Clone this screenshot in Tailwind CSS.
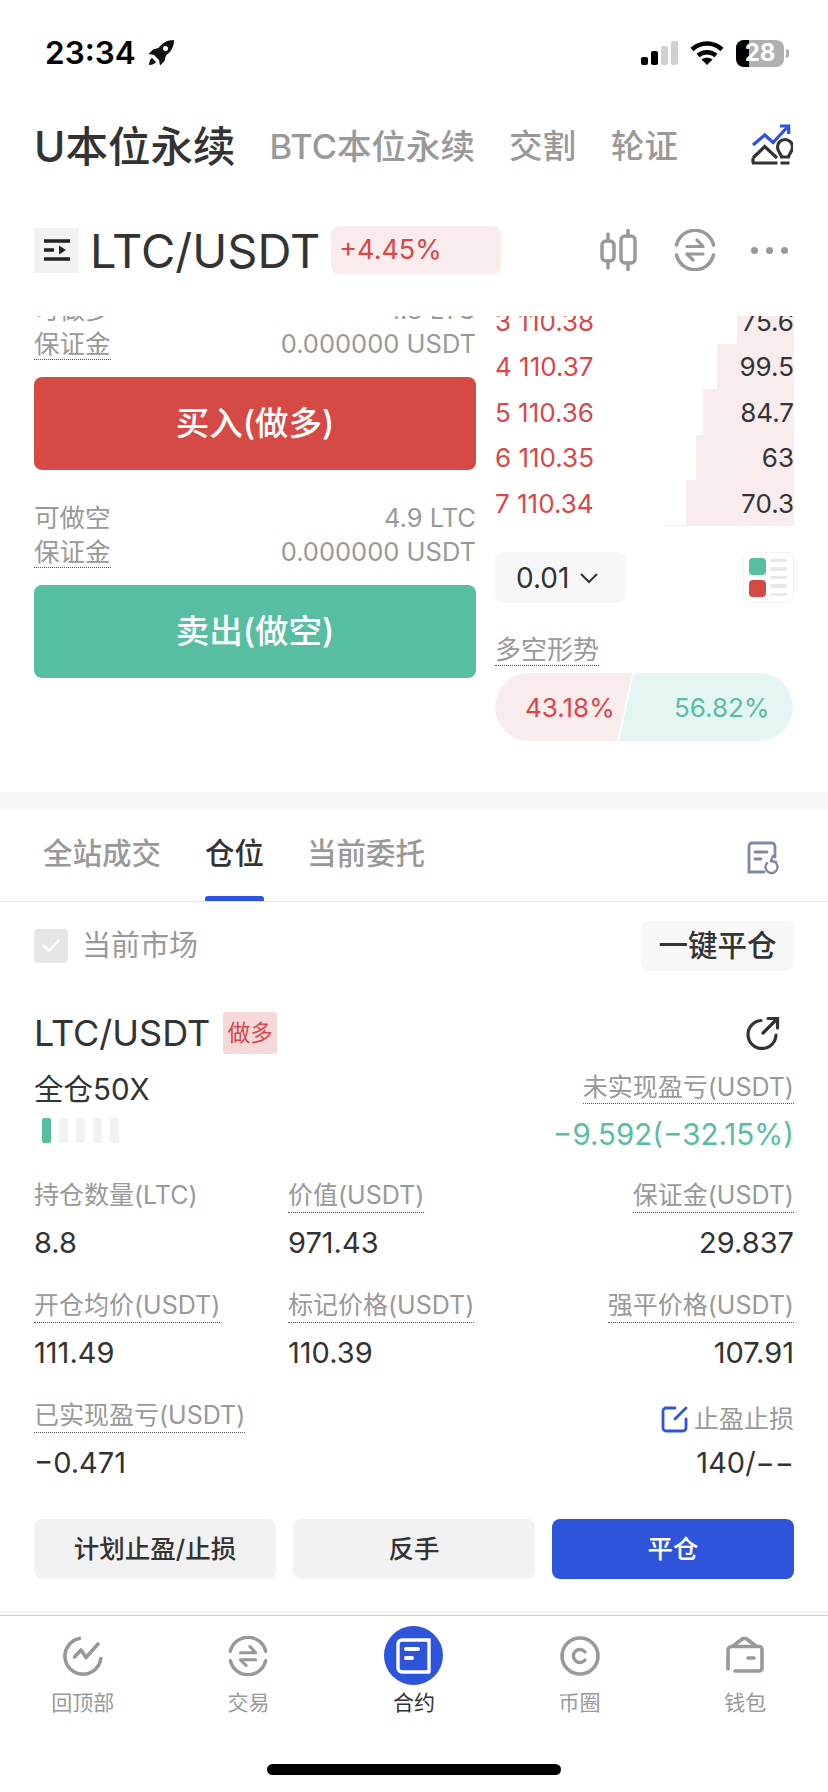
<!DOCTYPE html>
<html lang="zh-CN">
<head>
<meta charset="UTF-8">
<meta name="viewport" content="width=device-width, initial-scale=1.0">
<title>LTC/USDT</title>
<script src="https://cdn.jsdelivr.net/npm/@tailwindcss/browser@4"></script>
</head>
<body class="bg-white">
<div class="w-[828px] h-[1792px] overflow-hidden bg-white text-[#333] font-['Inter','Noto_Sans_CJK_SC',sans-serif]">

  <!-- status bar -->
  <div class="h-[106px] flex items-center pl-[45px] pr-[39px]">
    <span class="text-[31.500px] font-semibold text-black leading-none">23:34</span>
    <svg class="ml-[11px]" width="28" height="28" viewBox="0 0 28 28" fill="#111"><path d="M27 1c-7 0-12 3-15.500 8L6 10.500 1.500 15l5.500 1L12 21l1 5.500 4.500-4.500 1.500-5.500c5-3.500 8-8.500 8-15.500zM18.500 7a2.500 2.500 0 1 1 0 5 2.500 2.500 0 0 1 0-5z"/><path d="M5 19c-2 1-3 4-3 7 3 0 6-1 7-3z"/></svg>
    <div class="ml-auto flex items-end gap-[3px] h-[24px]">
      <div class="w-[7px] h-[8px] rounded-[2px] bg-black"></div>
      <div class="w-[7px] h-[14px] rounded-[2px] bg-black"></div>
      <div class="w-[7px] h-[19px] rounded-[2px] bg-[#d0d0d0]"></div>
      <div class="w-[7px] h-[24px] rounded-[2px] bg-[#d0d0d0]"></div>
    </div>
    <svg class="ml-[12px]" width="34" height="26" viewBox="0 0 34 26" fill="none" stroke="#000" stroke-width="4.500"><path d="M2 9.500c8.500-8 21.500-8 30 0"/><path d="M8 15.500c5-4.500 13-4.500 18 0"/><path d="M17 25l-5.500-5.500c3-2.500 8-2.500 11 0z" fill="#000" stroke="none"/></svg>
    <div class="ml-[12px] relative w-[48px] h-[27px] rounded-[8px] bg-[#b0b0b0] overflow-hidden flex items-center justify-center">
      <div class="absolute left-0 inset-y-0 w-[13px] bg-black"></div>
      <span class="relative text-white text-[24px] font-bold leading-none">28</span>
    </div>
    <div class="ml-[2px] w-[3px] h-[9px] rounded-r-full bg-[#b0b0b0]"></div>
  </div>

  <!-- product tabs -->
  <div class="h-[82px] flex items-center pl-[34px] pr-[35px]">
    <span class="text-[42.500px] font-medium text-[#333] leading-none">U本位永续</span>
    <span class="ml-[34px] text-[34.500px] font-medium text-[#999] leading-none">BTC本位永续</span>
    <span class="ml-[34px] text-[33.500px] font-medium text-[#999] leading-none">交割</span>
    <span class="ml-[35px] text-[33.500px] font-medium text-[#999] leading-none">轮证</span>
    <svg class="ml-auto" width="42" height="46" viewBox="-2 -1 42 46" fill="none" stroke-width="3.200">
      <path d="M0 20l11.700-10 8.300 7.500L35 1.500M27 1h8.700v8" stroke="#2f54dc"/>
      <path d="M0 33l11.700-11.500L24 33M-1 38h25.500M0 33v5" stroke="#333"/>
      <path d="M29 32c0-3-4-5-4-10a7.500 7.500 0 0 1 15 0c0 5-4 7-4 10zM28 38h9" stroke="#333" transform="translate(-.5 0)"/>
    </svg>
  </div>

  <!-- symbol row -->
  <div class="h-[128px] flex items-center pl-[34px] pr-[40px] pb-[4px]">
    <div class="w-[45px] h-[45px] bg-[#f2f2f2] flex items-center justify-center">
      <svg width="28" height="24" viewBox="0 0 28 24" fill="none" stroke="#222" stroke-width="3.600"><path d="M1 3h26M1 12h10M1 21h26"/><path d="M16 7.500l7 4.500-7 4.500z" fill="#222" stroke="none"/></svg>
    </div>
    <span class="ml-[11px] text-[47px] font-normal text-[#333] leading-none">LTC/USDT</span>
    <div class="ml-[11px] w-[170px] h-[48px] rounded-[8px] bg-[#f9ecec] flex items-center pl-[8px] text-[27px] text-[#d8474a]">+4.45%</div>
    <svg class="ml-auto" width="38" height="42" viewBox="0 0 38 42" fill="none" stroke="#999" stroke-width="3.500" stroke-linecap="round"><rect x="2" y="12" width="12" height="20" rx="4"/><path d="M8 5v7M8 32v7"/><rect x="21" y="7" width="14" height="27" rx="4"/><path d="M28 1v6M28 34v7"/></svg>
    <svg class="ml-[36px]" width="42" height="42" viewBox="0 0 42 42" fill="none" stroke="#999" stroke-width="3.500" stroke-linecap="round"><path d="M2.500 16a19 19 0 0 1 37 0M2.500 26a19 19 0 0 0 37 0"/><path d="M13 17.500h16M23 11l6 6.500M29 25H13M19 31l-6-6" stroke-width="3.200"/></svg>
    <div class="ml-[35px] flex gap-[8px]">
      <div class="w-[7px] h-[7px] rounded-full bg-[#999]"></div>
      <div class="w-[7px] h-[7px] rounded-full bg-[#999]"></div>
      <div class="w-[7px] h-[7px] rounded-full bg-[#999]"></div>
    </div>
  </div>

  <!-- order panel, scrolled -->
  <div class="h-[476px] overflow-hidden flex pl-[34px] gap-[19px]">
    <div class="w-[442px] -mt-[23px] text-[25.500px] text-[#999]">
      <div class="h-[34px] flex items-center justify-between"><span>可做多</span><span>1.8 LTC</span></div>
      <div class="h-[34px] flex items-center justify-between"><span class="border-b border-dotted border-[#555] leading-[30px]">保证金</span><span>0.000000 USDT</span></div>
      <div class="mt-[16px] h-[93px] rounded-[8px] bg-[#d64a45] flex items-center justify-center text-white text-[33.500px] font-medium">买入(做多)</div>
      <div class="mt-[31px] h-[34px] flex items-center justify-between"><span>可做空</span><span>4.9 LTC</span></div>
      <div class="h-[34px] flex items-center justify-between"><span class="border-b border-dotted border-[#555] leading-[30px]">保证金</span><span>0.000000 USDT</span></div>
      <div class="mt-[16px] h-[93px] rounded-[8px] bg-[#57bea2] flex items-center justify-center text-white text-[33.500px] font-medium">卖出(做空)</div>
    </div>

    <div class="w-[299px] -mt-[17px]">
      <div class="text-[26px]">
        <div class="relative h-[45px] flex items-center justify-between">
          <div class="absolute right-0 inset-y-0 bg-[#f9ecec]" style="width:57px"></div>
          <span class="relative text-[#d8474a]">3 110.38</span><span class="relative">75.6</span>
        </div>
        <div class="relative h-[45px] flex items-center justify-between">
          <div class="absolute right-0 inset-y-0 bg-[#f9ecec]" style="width:77px"></div>
          <span class="relative text-[#d8474a]">4 110.37</span><span class="relative">99.5</span>
        </div>
        <div class="relative h-[46px] flex items-center justify-between">
          <div class="absolute right-0 inset-y-0 bg-[#f9ecec]" style="width:91px"></div>
          <span class="relative text-[#d8474a]">5 110.36</span><span class="relative">84.7</span>
        </div>
        <div class="relative h-[45px] flex items-center justify-between">
          <div class="absolute right-0 inset-y-0 bg-[#f9ecec]" style="width:98px"></div>
          <span class="relative text-[#d8474a]">6 110.35</span><span class="relative">63</span>
        </div>
        <div class="relative h-[46px] flex items-center justify-between">
          <div class="absolute right-0 inset-y-0 bg-[#f9ecec]" style="width:108px"></div>
          <div class="absolute right-0 bottom-0 h-[1px] bg-[#f9ecec]" style="width:130px"></div>
          <span class="relative text-[#d8474a]">7 110.34</span><span class="relative">70.3</span>
        </div>
      </div>

      <div class="mt-[26px] h-[51px] flex justify-between">
        <div class="w-[131px] rounded-[8px] bg-[#f7f7f7] flex items-center pl-[21px] text-[28px]">
          0.01
          <svg class="ml-[10px]" width="20" height="12" viewBox="0 0 20 12" fill="none" stroke="#333" stroke-width="2"><path d="M2 2l8 8 8-8"/></svg>
        </div>
        <div class="w-[51px] rounded-[8px] border border-[#f2f2f2] flex items-center gap-[4px] pl-[5px]">
          <div class="flex flex-col gap-[5px]">
            <div class="w-[17px] h-[17px] rounded-[4px] bg-[#57bea2]"></div>
            <div class="w-[17px] h-[17px] rounded-[4px] bg-[#d64a45]"></div>
          </div>
          <div class="flex flex-col gap-[5px]">
            <div class="w-[17px] h-[3.500px] rounded-full bg-[#e8e8e8]"></div>
            <div class="w-[17px] h-[3.500px] rounded-full bg-[#e8e8e8]"></div>
            <div class="w-[17px] h-[3.500px] rounded-full bg-[#e8e8e8]"></div>
            <div class="w-[17px] h-[3.500px] rounded-full bg-[#e8e8e8]"></div>
            <div class="w-[17px] h-[3.500px] rounded-full bg-[#e8e8e8]"></div>
          </div>
        </div>
      </div>

      <div class="mt-[32px] h-[30px] flex">
        <span class="border-b border-dotted border-[#555] text-[26px] text-[#999] leading-[30px] h-[31px]">多空形势</span>
      </div>
      <div class="mt-[8px] h-[68px] flex text-[26px]">
        <div class="w-[137px] rounded-l-[34px] bg-[#f9ecec] text-[#d8474a] flex items-center pl-[30px] [clip-path:polygon(0_0,100%_0,calc(100%-15px)_100%,0_100%)]">43.18%</div>
        <div class="-ml-[13px] w-[174px] rounded-r-[34px] bg-[#e4f5f3] text-[#57bea2] flex items-center pl-[55px] [clip-path:polygon(15px_0,100%_0,100%_100%,0_100%)]">56.82%</div>
      </div>
    </div>
  </div>

  <div class="h-[17px] bg-[#f7f7f7]"></div>

  <!-- list tabs -->
  <div class="h-[93px] border-b border-[#e8e8e8] flex pl-[43px] pr-[49px] text-[29.500px] font-medium text-[#999]">
    <span class="pt-[22px]">全站成交</span>
    <div class="ml-[44px] w-[59px] flex flex-col items-center">
      <span class="pt-[22px] text-[#333]">仓位</span>
      <div class="mt-auto w-[59px] h-[5px] rounded-t-[3px] bg-[#2f54dc]"></div>
    </div>
    <span class="ml-[43px] pt-[22px]">当前委托</span>
    <svg class="ml-auto mt-[32px]" width="32" height="34" viewBox="0 0 32 34" fill="none" stroke="#7f8aa0" stroke-width="2.800" stroke-linecap="round"><path d="M28 16V5a3 3 0 0 0-3-3H5a3 3 0 0 0-3 3v26h15"/><path d="M8 11h12M8 18h6"/><path d="M20 22a6 6 0 1 0 5-2M26 15l-2 5 5 1" stroke-width="2.400"/></svg>
  </div>

  <!-- position filter -->
  <div class="h-[85px] flex items-center pl-[34px] pr-[34px] pt-[2px]">
    <div class="w-[34px] h-[34px] rounded-[4px] bg-[#e6e6e6] flex items-center justify-center">
      <svg width="20" height="16" viewBox="0 0 20 16" fill="none" stroke="#fff" stroke-width="2.400"><path d="M2 7l6 6L18 2"/></svg>
    </div>
    <span class="ml-[14px] text-[29px] text-[#999]">当前市场</span>
    <div class="ml-auto w-[153px] h-[50px] rounded-[8px] bg-[#f7f7f7] flex items-center justify-center text-[29.500px] font-medium">一键平仓</div>
  </div>

  <!-- position card -->
  <div class="pl-[34px] pr-[34px]">
    <div class="mt-[25px] flex items-center h-[42px]">
      <span class="text-[36px]">LTC/USDT</span>
      <div class="ml-[13px] w-[54px] h-[42px] rounded-[3px] bg-[#f5d9d9] text-[#d8474a] text-[22.500px] flex items-center justify-center">做多</div>
      <svg class="ml-auto mr-[14px]" width="34" height="34" viewBox="0 0 34 34" fill="none" stroke="#333" stroke-width="3.200" stroke-linecap="round"><path d="M15 4.500A14 14 0 1 0 30 19"/><path d="M17 17L31 3M22 2.500h9.500V12"/></svg>
    </div>
    <div class="mt-[17px] flex justify-between">
      <div>
        <div class="h-[38px] flex items-center text-[29.500px] leading-none">全仓50X</div>
        <div class="mt-[9px] ml-[8px] flex gap-[8px]">
          <div class="w-[9px] h-[25px] rounded-[2px] bg-[#57bea2]"></div>
          <div class="w-[9px] h-[25px] rounded-[2px] bg-[#f2f2f2]"></div>
          <div class="w-[9px] h-[25px] rounded-[2px] bg-[#f2f2f2]"></div>
          <div class="w-[9px] h-[25px] rounded-[2px] bg-[#f2f2f2]"></div>
          <div class="w-[9px] h-[25px] rounded-[2px] bg-[#f2f2f2]"></div>
        </div>
      </div>
      <div class="flex flex-col items-end">
        <span class="border-b border-dotted border-[#555] text-[25px] text-[#999] leading-[32px]">未实现盈亏(USDT)</span>
        <span class="mt-[9px] text-[29.500px] text-[#57bea2] leading-[42px]">−9.592(−32.15%)</span>
      </div>
    </div>

    <div class="mt-[23px] grid grid-cols-[254px_254px_1fr] gap-y-[25px]">
      <div>
        <div class="text-[25px] text-[#999] leading-[35px]">持仓数量(LTC)</div>
        <div class="mt-[10px] text-[29px] leading-[40px]">8.8</div>
      </div>
      <div>
        <div class="w-fit border-b border-dotted border-[#555] text-[25px] text-[#999] leading-[34px]">价值(USDT)</div>
        <div class="mt-[10px] text-[29px] leading-[40px]">971.43</div>
      </div>
      <div class="text-right">
        <div class="w-fit ml-auto border-b border-dotted border-[#555] text-[25px] text-[#999] leading-[34px]">保证金(USDT)</div>
        <div class="mt-[10px] text-[29px] leading-[40px]">29.837</div>
      </div>
      <div>
        <div class="w-fit border-b border-dotted border-[#555] text-[25px] text-[#999] leading-[34px]">开仓均价(USDT)</div>
        <div class="mt-[10px] text-[29px] leading-[40px]">111.49</div>
      </div>
      <div>
        <div class="w-fit border-b border-dotted border-[#555] text-[25px] text-[#999] leading-[34px]">标记价格(USDT)</div>
        <div class="mt-[10px] text-[29px] leading-[40px]">110.39</div>
      </div>
      <div class="text-right">
        <div class="w-fit ml-auto border-b border-dotted border-[#555] text-[25px] text-[#999] leading-[34px]">强平价格(USDT)</div>
        <div class="mt-[10px] text-[29px] leading-[40px]">107.91</div>
      </div>
      <div>
        <div class="w-fit border-b border-dotted border-[#555] text-[25px] text-[#999] leading-[34px]">已实现盈亏(USDT)</div>
        <div class="mt-[10px] text-[29px] leading-[40px]">−0.471</div>
      </div>
      <div></div>
      <div class="text-right">
        <div class="flex justify-end items-center gap-[6px] text-[25px] text-[#999] h-[35px] pt-[8px]">
          <svg width="27" height="27" viewBox="0 0 27 27" fill="none" stroke="#2f54dc" stroke-width="2.800" stroke-linecap="round"><path d="M14 2H5a3 3 0 0 0-3 3v17a3 3 0 0 0 3 3h17a3 3 0 0 0 3-3v-9"/><path d="M14 13L25 2"/></svg>
          止盈止损
        </div>
        <div class="mt-[10px] text-[29px] leading-[40px]">140/−−</div>
      </div>
    </div>

    <div class="mt-[36px] grid grid-cols-3 gap-[17px] text-[25.500px] font-medium">
      <div class="h-[60px] rounded-[8px] bg-[#f2f2f2] flex items-center justify-center">计划止盈/止损</div>
      <div class="h-[60px] rounded-[8px] bg-[#f2f2f2] flex items-center justify-center">反手</div>
      <div class="h-[60px] rounded-[8px] bg-[#2f54dc] text-white flex items-center justify-center">平仓</div>
    </div>
  </div>

  <!-- bottom tab bar -->
  <div class="mt-[32px] h-[2px] bg-[#f2f2f2]"></div>
  <div class="mt-[2px] h-[1px] bg-[#d0d0d0]"></div>
  <div class="mt-[10px] grid grid-cols-5 text-[21px] text-[#999]">
    <div class="flex flex-col items-center">
      <div class="h-[59px] flex items-center">
        <svg width="40" height="40" viewBox="0 0 40 40" fill="none" stroke="#999" stroke-width="3.600" stroke-linecap="round" stroke-linejoin="round"><path d="M16.500 2.500A18 18 0 1 0 37.800 22.500"/><path d="M11.500 21L18 14l5 7.500L35 8"/></svg>
      </div>
      <span class="mt-[3px] leading-[30px]">回顶部</span>
    </div>
    <div class="flex flex-col items-center">
      <div class="h-[59px] flex items-center">
        <svg width="40" height="40" viewBox="0 0 42 42" fill="none" stroke="#999" stroke-width="3.600" stroke-linecap="round"><path d="M2.500 16a19 19 0 0 1 37 0M2.500 26a19 19 0 0 0 37 0"/><path d="M13 17.500h16M23 11l6 6.500M29 25H13M19 31l-6-6" stroke-width="3.200"/></svg>
      </div>
      <span class="mt-[3px] leading-[30px]">交易</span>
    </div>
    <div class="flex flex-col items-center">
      <div class="w-[59px] h-[59px] rounded-full bg-[#2f54dc] flex items-center justify-center">
        <svg width="38" height="36" viewBox="0 0 38 36" fill="none" stroke="#fff" stroke-width="3.400" stroke-linecap="round"><path d="M34 34V2H7a4 4 0 0 0-4 4v24a4 4 0 0 0 4 4h27"/><path d="M11 11h12M11 20h6" stroke-width="4"/></svg>
      </div>
      <span class="mt-[3px] leading-[30px] text-[#333]">合约</span>
    </div>
    <div class="flex flex-col items-center">
      <div class="h-[59px] flex items-center">
        <svg width="40" height="40" viewBox="0 0 40 40" fill="none" stroke="#999" stroke-width="3.600" stroke-linecap="round"><circle cx="20" cy="20" r="18"/><path d="M25 16a6.500 6.500 0 1 0 0 8" stroke-width="3.400"/></svg>
      </div>
      <span class="mt-[3px] leading-[30px]">币圈</span>
    </div>
    <div class="flex flex-col items-center">
      <div class="h-[59px] flex items-center">
        <svg width="40" height="40" viewBox="0 0 40 40" fill="none" stroke="#999" stroke-width="3.600" stroke-linecap="round" stroke-linejoin="round"><path d="M3 33V14a3.500 3.500 0 0 1 3.500-3.500H34a3 3 0 0 1 3 3V32a3 3 0 0 1-3 3H10"/><path d="M8 10l10-7.500 3 0L31 10"/><path d="M23 22h6"/></svg>
      </div>
      <span class="mt-[3px] leading-[30px]">钱包</span>
    </div>
  </div>

  <!-- home indicator -->
  <div class="mt-[46px] mx-auto w-[294px] h-[11px] rounded-full bg-black"></div>
</div>
</body>
</html>
